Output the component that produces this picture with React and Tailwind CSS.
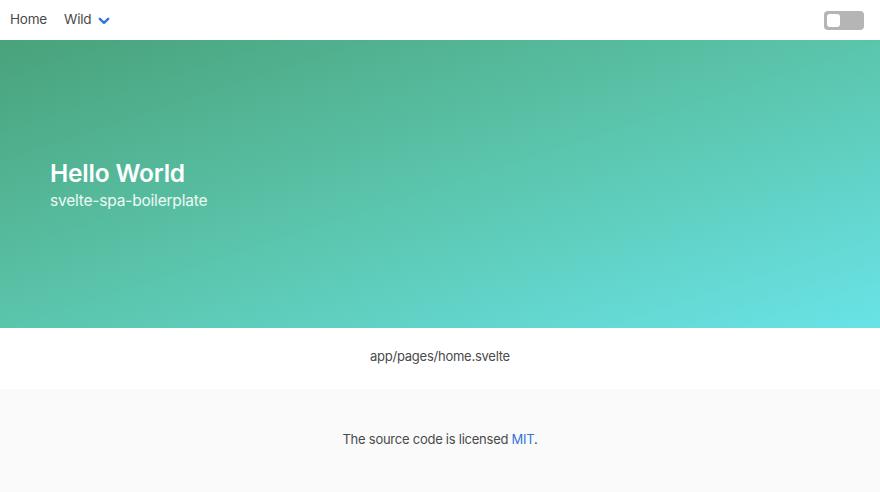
import React from "react";

export default function App() {
  return (
    <div className="min-h-[492px] flex flex-col bg-white text-[#4a4a4a]" style={{ fontFamily: "Inter, 'Noto Sans', sans-serif" }}>
      <nav className="h-10 flex items-center justify-between bg-white">
        <div className="flex items-center">
          <a className="pl-[10px] pr-3 text-[13.5px] leading-none tracking-[-0.2px] text-[#4a4a4a]">Home</a>
          <a className="ml-[5px] flex items-center text-[13.5px] leading-none tracking-[-0.2px] text-[#4a4a4a]">
            Wild
            <svg className="ml-[7px] mt-[1px]" width="12" height="8" viewBox="0 0 12 8" fill="none">
              <path d="M1.8 1.8 L6 5.8 L10.2 1.8" stroke="#3273dc" strokeWidth="2.4" strokeLinecap="round" strokeLinejoin="round" />
            </svg>
          </a>
        </div>
        <div className="mr-4 w-10 h-[19px] rounded-[4px] bg-[#b5b5b5] flex items-center px-[3px]">
          <div className="w-[13px] h-[13px] rounded-[3px] bg-white" />
        </div>
      </nav>
      <section className="h-[288px] flex flex-col justify-center pl-[50px] pt-[3px] bg-[linear-gradient(to_bottom_right,#49a27a,#5bc5ac_50%,#69e3e8)]">
        <h1 className="text-[24.5px] font-semibold text-white leading-[30px] tracking-[-0.2px] mt-[-2px]">Hello World</h1>
        <h2 className="text-[15.5px] text-white/90 leading-[22px] tracking-[-0.2px] mt-[2px]">svelte-spa-boilerplate</h2>
      </section>
      <section className="h-[61px] flex items-center justify-center pb-[3px] text-[13px] tracking-[-0.25px] text-[#4a4a4a]">
        app/pages/home.svelte
      </section>
      <footer className="flex-1 h-[103px] bg-[#fafafa] flex items-center justify-center pb-[2px] text-[13px] tracking-[-0.25px] text-[#4a4a4a]">
        <p>
          The source code is licensed <a className="text-[#3273dc]">MIT</a>.
        </p>
      </footer>
    </div>
  );
}
